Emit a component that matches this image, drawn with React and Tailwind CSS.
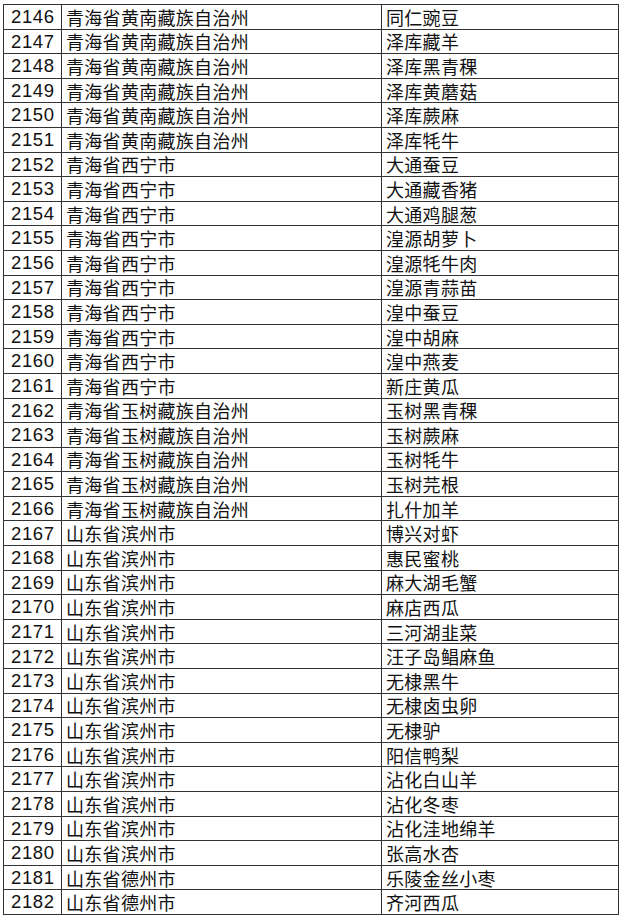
const rows = [
  [2146, '青海省黄南藏族自治州', '同仁豌豆'],
  [2147, '青海省黄南藏族自治州', '泽库藏羊'],
  [2148, '青海省黄南藏族自治州', '泽库黑青稞'],
  [2149, '青海省黄南藏族自治州', '泽库黄蘑菇'],
  [2150, '青海省黄南藏族自治州', '泽库蕨麻'],
  [2151, '青海省黄南藏族自治州', '泽库牦牛'],
  [2152, '青海省西宁市', '大通蚕豆'],
  [2153, '青海省西宁市', '大通藏香猪'],
  [2154, '青海省西宁市', '大通鸡腿葱'],
  [2155, '青海省西宁市', '湟源胡萝卜'],
  [2156, '青海省西宁市', '湟源牦牛肉'],
  [2157, '青海省西宁市', '湟源青蒜苗'],
  [2158, '青海省西宁市', '湟中蚕豆'],
  [2159, '青海省西宁市', '湟中胡麻'],
  [2160, '青海省西宁市', '湟中燕麦'],
  [2161, '青海省西宁市', '新庄黄瓜'],
  [2162, '青海省玉树藏族自治州', '玉树黑青稞'],
  [2163, '青海省玉树藏族自治州', '玉树蕨麻'],
  [2164, '青海省玉树藏族自治州', '玉树牦牛'],
  [2165, '青海省玉树藏族自治州', '玉树芫根'],
  [2166, '青海省玉树藏族自治州', '扎什加羊'],
  [2167, '山东省滨州市', '博兴对虾'],
  [2168, '山东省滨州市', '惠民蜜桃'],
  [2169, '山东省滨州市', '麻大湖毛蟹'],
  [2170, '山东省滨州市', '麻店西瓜'],
  [2171, '山东省滨州市', '三河湖韭菜'],
  [2172, '山东省滨州市', '汪子岛鲳麻鱼'],
  [2173, '山东省滨州市', '无棣黑牛'],
  [2174, '山东省滨州市', '无棣卤虫卵'],
  [2175, '山东省滨州市', '无棣驴'],
  [2176, '山东省滨州市', '阳信鸭梨'],
  [2177, '山东省滨州市', '沾化白山羊'],
  [2178, '山东省滨州市', '沾化冬枣'],
  [2179, '山东省滨州市', '沾化洼地绵羊'],
  [2180, '山东省滨州市', '张高水杏'],
  [2181, '山东省德州市', '乐陵金丝小枣'],
  [2182, '山东省德州市', '齐河西瓜'],
]

export default function App() {
  return (
    <div className="w-[624px] h-[922px] bg-white pl-[3px] pt-[4px] text-[#111] font-['Liberation_Sans','Noto_Sans_CJK_SC',sans-serif]">
      <div className="w-[616px] h-[911px] grid grid-rows-[repeat(37,1fr)] border-t border-l border-[#333]">
        {rows.map(([no, region, product]) => (
          <div key={no} className="grid grid-cols-[58px_320px_1fr]">
            <div className="border-r border-b border-[#333] flex items-center pl-[7px] pt-[1px] text-[18.5px] leading-none tracking-[0.6px]">
              {no}
            </div>
            <div className="border-r border-b border-[#333] flex items-center pl-[4px] text-[18px] leading-none font-['Noto_Sans_CJK_SC',sans-serif] tracking-[0.3px]">
              {region}
            </div>
            <div className="border-r border-b border-[#333] flex items-center pl-[4px] text-[18px] leading-none font-['Noto_Sans_CJK_SC',sans-serif] tracking-[0.3px]">
              {product}
            </div>
          </div>
        ))}
      </div>
    </div>
  )
}
